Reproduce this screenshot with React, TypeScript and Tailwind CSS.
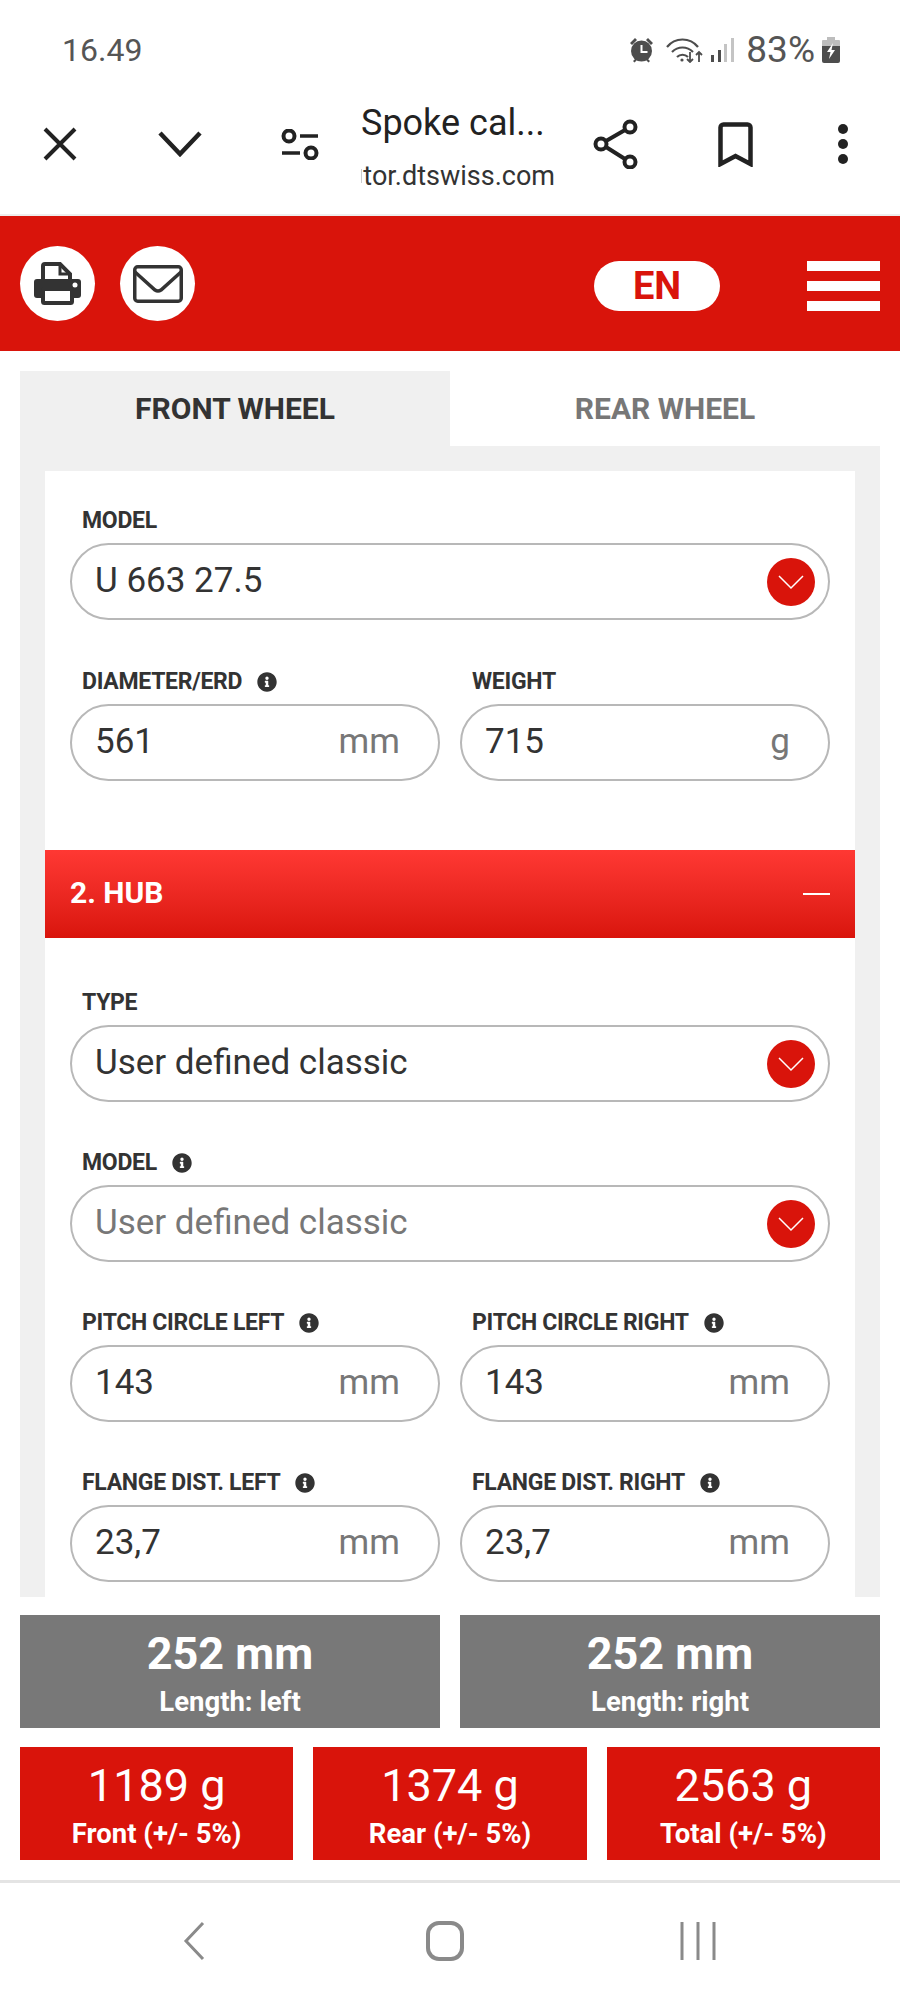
import { FaInfoCircle } from "react-icons/fa"

const RED = "bg-[#d9140b]"

const Label = ({ text, info }: { text: string; info?: boolean }) => (
  <div className="flex h-6 items-center pl-[12px] mb-[10px]">
    <span className="text-[23px] font-bold leading-6 text-[#333] tracking-[-0.3px] whitespace-nowrap">{text}</span>
    {info && <FaInfoCircle className="ml-[15px] shrink-0 text-[20px] text-[#333]" />}
  </div>
)

const Chevron = () => (
  <span className={`flex h-12 w-12 items-center justify-center rounded-full ${RED}`}>
    <svg width="28" height="16" viewBox="0 0 28 16" fill="none" stroke="#fff" strokeWidth="1.5">
      <path d="M2 2l12 12L26 2" />
    </svg>
  </span>
)

const SelectField = ({ label, value, info, muted }: { label: string; value: string; info?: boolean; muted?: boolean }) => (
  <div>
    <Label text={label} info={info} />
    <div className="flex h-[77px] items-center justify-between rounded-full border-2 border-[#b8b8b8] pl-[23px] pr-[13px]">
      <span className={`text-[35px] ${muted ? "text-[#777]" : "text-[#333]"}`}>{value}</span>
      <Chevron />
    </div>
  </div>
)

const NumberField = ({ label, value, unit, info }: { label: string; value: string; unit: string; info?: boolean }) => (
  <div>
    <Label text={label} info={info} />
    <div className="flex h-[77px] items-center justify-between rounded-full border-2 border-[#b8b8b8] pl-[23px] pr-[38px]">
      <span className="text-[35px] text-[#333]">{value}</span>
      <span className="text-[35px] text-[#777]">{unit}</span>
    </div>
  </div>
)

const StatusBar = () => (
  <div className="flex h-[74px] items-end pb-[6px] pl-[62px] pr-[60px] text-[#555]">
    <span className="text-[32px] leading-9">16.49</span>
    <div className="ml-auto flex items-center">
      <svg width="25" height="26" viewBox="0 0 25 26" fill="#4d4d4d">
        <circle cx="12.5" cy="14" r="10.5" />
        <path d="M1 6l5-5 2 2-5 5zM24 6l-5-5-2 2 5 5zM4 24l3-3 1.5 1.5-3 3zM21 24l-3-3-1.5 1.5 3 3z" />
        <path d="M12.5 8v7h6" stroke="#fff" strokeWidth="2" fill="none" />
      </svg>
      <svg className="ml-3" width="37" height="26" viewBox="0 0 37 26" fill="none" stroke="#4d4d4d" strokeWidth="2.2">
        <path d="M1 10C9 0 24 0 32 10M6 15C12 9 21 9 27 15M11 20C14 17 19 17 22 20" />
        <circle cx="16" cy="23" r="1.6" fill="#4d4d4d" stroke="none" />
        <path d="M24 15v10M21 22l3 3 3-3M33 25V15M30 18l3-3 3 3" strokeWidth="1.8" />
      </svg>
      <svg className="ml-[8px]" width="23" height="26" viewBox="0 0 23 26">
        <rect x="0" y="18" width="3" height="7" fill="#4d4d4d" />
        <rect x="7" y="13" width="3" height="12" fill="#4d4d4d" />
        <rect x="13" y="7" width="3" height="18" fill="#c4c4c4" />
        <rect x="20" y="1" width="3" height="24" fill="#c4c4c4" />
      </svg>
      <span className="ml-[12px] text-[37px] leading-9">83%</span>
      <svg className="ml-[7px]" width="18" height="26" viewBox="0 0 18 26">
        <path d="M5 0h8v3h4a1 1 0 011 1v5H0V4a1 1 0 011-1h4z" fill="#bdbdbd" />
        <path d="M0 9h18v15a2 2 0 01-2 2H2a2 2 0 01-2-2z" fill="#4d4d4d" />
        <path d="M11 6L5 15h3.5L7 22l6-9H9.500z" fill="#fff" />
      </svg>
    </div>
  </div>
)

const BrowserBar = () => (
  <div className="flex h-[142px] items-center border-b-2 border-[#eee]">
    <svg className="ml-[43px]" width="34" height="34" viewBox="0 0 34 34" stroke="#222" strokeWidth="4" fill="none">
      <path d="M2 2l30 30M32 2L2 32" />
    </svg>
    <svg className="ml-[81px]" width="44" height="26" viewBox="0 0 44 26" stroke="#222" strokeWidth="4.500" fill="none">
      <path d="M2 2l20 21L42 2" />
    </svg>
    <svg className="ml-[79px]" width="38" height="31" viewBox="0 0 38 31" stroke="#222" strokeWidth="3.500" fill="none">
      <circle cx="8" cy="7" r="5.500" strokeWidth="4" />
      <path d="M19 7h18M1 24h18" />
      <circle cx="30" cy="24" r="5.500" strokeWidth="4" />
    </svg>
    <div className="ml-[42px] w-[194px] pt-[5px] text-[#222]">
      <div className="text-[36px] leading-[44px] whitespace-nowrap">Spoke cal...</div>
      <div className="mt-[15px] flex items-center justify-end text-[27px] leading-8 text-[#333] whitespace-nowrap">
        <span className="mr-[1px] h-[14px] w-px bg-[#ccc]" />
        tor.dtswiss.com
      </div>
    </div>
    <svg className="ml-[38px]" width="45" height="50" viewBox="0 0 45 50" stroke="#222" strokeWidth="4" fill="none">
      <circle cx="37" cy="8" r="5.500" />
      <circle cx="8" cy="25" r="5.500" />
      <circle cx="37" cy="43" r="5.500" />
      <path d="M32 11L13 22M13 28l19 12" />
    </svg>
    <svg className="ml-[80px]" width="35" height="45" viewBox="0 0 35 45" stroke="#222" strokeWidth="4.500" fill="none">
      <path d="M2.500 42V5.500a3 3 0 013-3h24a3 3 0 013 3V42L17.500 34z" />
    </svg>
    <div className="ml-[85px] flex flex-col gap-[5px]">
      <span className="h-[10px] w-[10px] rounded-full bg-[#222]" />
      <span className="h-[10px] w-[10px] rounded-full bg-[#222]" />
      <span className="h-[10px] w-[10px] rounded-full bg-[#222]" />
    </div>
  </div>
)

const RedHeader = () => (
  <div className={`flex h-[135px] items-center pl-5 pr-5 ${RED}`}>
    <span className="flex h-[75px] w-[75px] items-center justify-center rounded-full bg-white">
      <svg width="47" height="43" viewBox="0 0 47 43">
        <path d="M9 18V4a2 2 0 012-2h15l10 10v6" fill="none" stroke="#333" strokeWidth="4" />
        <path d="M26 2v10h10" fill="none" stroke="#333" strokeWidth="3" />
        <path d="M3 17h41a3 3 0 013 3v13a3 3 0 01-3 3H3a3 3 0 01-3-3V20a3 3 0 013-3z" fill="#333" />
        <circle cx="41" cy="23" r="2.500" fill="#fff" />
        <rect x="9" y="27" width="29" height="14" rx="1.500" fill="#fff" stroke="#333" strokeWidth="4" />
      </svg>
    </span>
    <span className="ml-[25px] flex h-[75px] w-[75px] items-center justify-center rounded-full bg-white">
      <svg width="50" height="38" viewBox="0 0 50 38" fill="none" stroke="#333" strokeWidth="3.500">
        <rect x="1.750" y="1.750" width="46.500" height="34.500" rx="3" />
        <path d="M2 7l20 18q3 2 6 0L48 7" />
      </svg>
    </span>
    <span className="ml-auto mt-[5px] flex h-[50px] w-[126px] items-center justify-center rounded-full bg-white text-[38px] font-bold text-[#d9140b]">
      EN
    </span>
    <div className="ml-[87px] mt-[5px] flex w-[73px] flex-col gap-[10px]">
      <span className="h-[10px] bg-white" />
      <span className="h-[10px] bg-white" />
      <span className="h-[10px] bg-white" />
    </div>
  </div>
)

const Form = () => (
  <div className="h-[1246px] overflow-hidden px-5 pt-5">
    <div className="flex h-[75px] text-[30px] font-bold">
      <div className="flex w-[430px] items-center justify-center bg-[#f0f0f0] text-[#333]">FRONT WHEEL</div>
      <div className="flex w-[430px] items-center justify-center text-[#777]">REAR WHEEL</div>
    </div>
    <div className="bg-[#f0f0f0] px-[25px] pt-[25px]">
      <div className="bg-white">
        <div className="px-[25px] pt-[38px] pb-[69px]">
          <SelectField label="MODEL" value="U 663 27.5" />
          <div className="mt-[50px] grid grid-cols-2 gap-5">
            <NumberField label="DIAMETER/ERD" value="561" unit="mm" info />
            <NumberField label="WEIGHT" value="715" unit="g" />
          </div>
        </div>
        <div className="flex h-[88px] items-center justify-between bg-gradient-to-b from-[#ff3833] to-[#d9140b] px-[25px]">
          <span className="pb-[4px] text-[30px] font-bold text-white">2. HUB</span>
          <span className="h-[2px] w-[27px] bg-white" />
        </div>
        <div className="flex flex-col gap-[49px] px-[25px] pt-[53px]">
          <SelectField label="TYPE" value="User defined classic" />
          <SelectField label="MODEL" value="User defined classic" info muted />
          <div className="grid grid-cols-2 gap-5">
            <NumberField label="PITCH CIRCLE LEFT" value="143" unit="mm" info />
            <NumberField label="PITCH CIRCLE RIGHT" value="143" unit="mm" info />
          </div>
          <div className="grid grid-cols-2 gap-5">
            <NumberField label="FLANGE DIST. LEFT" value="23,7" unit="mm" info />
            <NumberField label="FLANGE DIST. RIGHT" value="23,7" unit="mm" info />
          </div>
          <div className="h-[200px]" />
        </div>
      </div>
    </div>
  </div>
)

const Results = () => (
  <div className="px-5 pt-[18px]">
    <div className="grid grid-cols-2 gap-5">
      {["left", "right"].map((side) => (
        <div key={side} className="flex h-[113px] flex-col items-center bg-[#787878] text-white">
          <div className="mt-[14px] text-[45px] font-bold leading-[50px]">252 mm</div>
          <div className="mt-[7px] text-[27.5px] font-bold leading-8">Length: {side}</div>
        </div>
      ))}
    </div>
    <div className="mt-[19px] grid grid-cols-3 gap-5">
      {[
        ["1189 g", "Front (+/- 5%)"],
        ["1374 g", "Rear (+/- 5%)"],
        ["2563 g", "Total (+/- 5%)"],
      ].map(([weight, note]) => (
        <div key={note} className={`flex h-[113px] flex-col items-center text-white ${RED}`}>
          <div className="mt-[14px] text-[45px] leading-[50px]">{weight}</div>
          <div className="mt-[7px] text-[27.5px] font-bold leading-8">{note}</div>
        </div>
      ))}
    </div>
  </div>
)

const NavBar = () => (
  <div className="mt-5 flex h-[120px] items-start border-t-[3px] border-[#e4e4e4] pt-[38px]">
    <svg className="ml-[183px]" width="22" height="40" viewBox="0 0 22 40" stroke="#8a8a8a" strokeWidth="3" fill="none">
      <path d="M20 2L3 20l17 18" />
    </svg>
    <svg className="ml-[221px]" width="38" height="40" viewBox="0 0 38 40" stroke="#8a8a8a" strokeWidth="4" fill="none">
      <rect x="2" y="2" width="34" height="36" rx="11" />
    </svg>
    <svg className="ml-[216px]" width="36" height="40" viewBox="0 0 36 40" stroke="#8a8a8a" strokeWidth="3" fill="none">
      <path d="M2 1v38M18 1v38M34 1v38" />
    </svg>
  </div>
)

const App = () => {
  return (
    <div className="h-[2000px] w-[900px] overflow-hidden bg-white font-['Roboto',sans-serif]">
      <StatusBar />
      <BrowserBar />
      <RedHeader />
      <Form />
      <Results />
      <NavBar />
    </div>
  )
}

export default App
